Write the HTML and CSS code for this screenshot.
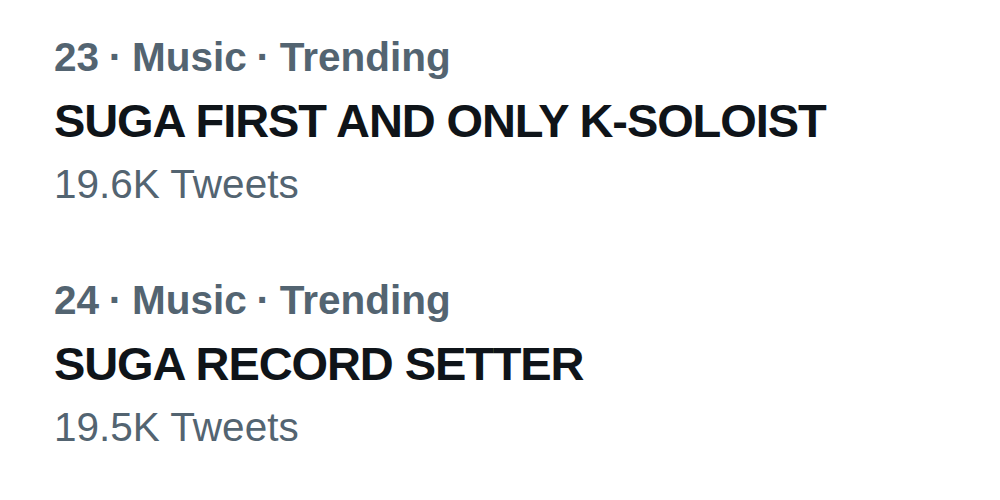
FILE: index.html
```html
<!DOCTYPE html>
<html>
<head>
<meta charset="utf-8">
<link rel="stylesheet" href="styles.css">
</head>
<body>
<div class="trends">
  <div class="trend">
    <div class="meta">23 · Music · Trending</div>
    <div class="title">SUGA FIRST AND ONLY K-SOLOIST</div>
    <div class="count">19.6K Tweets</div>
  </div>
  <div class="trend">
    <div class="meta">24 · Music · Trending</div>
    <div class="title">SUGA RECORD SETTER</div>
    <div class="count">19.5K Tweets</div>
  </div>
</div>
</body>
</html>
```
FILE: styles.css
```css
html, body {
  margin: 0;
  padding: 0;
  background: #ffffff;
}
body {
  font-family: "Liberation Sans", Arial, sans-serif;
  width: 1000px;
  height: 500px;
  overflow: hidden;
}
.trends {
  display: flex;
  flex-direction: column;
  gap: 64px;
  padding: 33px 0 0 54px;
}
.trend {
  display: flex;
  flex-direction: column;
}
.meta {
  font-size: 40.5px;
  line-height: 48px;
  font-weight: 700;
  color: #536471;
  word-spacing: -1.5px;
}
.title {
  margin-top: 8px;
  font-size: 47px;
  line-height: 64px;
  font-weight: 700;
  color: #0f1419;
  letter-spacing: -1.1px;
}
.count {
  margin-top: 3px;
  font-size: 40.5px;
  line-height: 56px;
  font-weight: 400;
  color: #536471;
}
```
